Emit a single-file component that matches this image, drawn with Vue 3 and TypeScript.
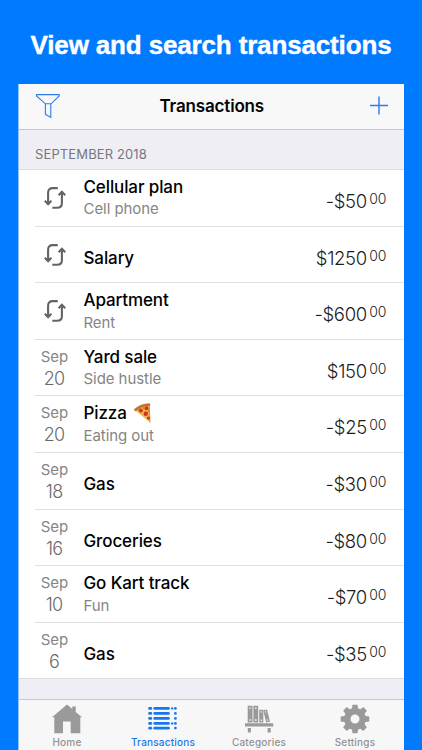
<script setup lang="ts">
interface Transaction {
  title: string
  category?: string
  day?: number
  sign: string
  amount: string
  pizza?: boolean
}

const transactions: Transaction[] = [
  { title: 'Cellular plan', category: 'Cell phone', sign: '-', amount: '50' },
  { title: 'Salary', sign: '', amount: '1250' },
  { title: 'Apartment', category: 'Rent', sign: '-', amount: '600' },
  { title: 'Yard sale', category: 'Side hustle', day: 20, sign: '', amount: '150' },
  { title: 'Pizza', category: 'Eating out', day: 20, sign: '-', amount: '25', pizza: true },
  { title: 'Gas', day: 18, sign: '-', amount: '30' },
  { title: 'Groceries', day: 16, sign: '-', amount: '80' },
  { title: 'Go Kart track', category: 'Fun', day: 10, sign: '-', amount: '70' },
  { title: 'Gas', day: 6, sign: '-', amount: '35' },
]

const listRows = [4, 9, 14, 19, 23.7]
const teeth = [0, 45, 90, 135, 180, 225, 270, 315]
</script>

<template>
  <main class="page">
    <h1 class="headline"><span>View and search transactions</span></h1>
    <section class="phone">
      <header class="nav">
        <svg class="funnel" width="26" height="26" viewBox="0 0 26 26">
          <path d="M1.5 1.6H24.2V3L16.1 10.8H10.4L1.5 3Z M10.4 10.8V21.4L15.8 24.3V10.8" />
        </svg>
        <h2>Transactions</h2>
        <svg class="plus" width="20" height="20" viewBox="0 0 20 20">
          <path d="M1 10.5H19 M10 1.5V19.5" />
        </svg>
      </header>
      <div class="section">SEPTEMBER 2018</div>
      <ul class="list">
        <li v-for="(t, i) in transactions" :key="i" class="row">
          <div class="when">
            <template v-if="t.day">
              <span class="month">Sep</span>
              <span class="day">{{ t.day }}</span>
            </template>
            <svg v-else class="repeat" width="22" height="22" viewBox="0 0 22 22">
              <path d="M13.8 1.1H8.8Q4.1 1.1 4.1 5.6V17 M.8 13.8L4.1 17.2L7.4 13.8 M8.3 20.8H13.1Q17.9 20.8 17.9 16.3V5 M14.6 8.2L17.9 4.8L21.2 8.2" />
            </svg>
          </div>
          <div class="body">
            <div class="info" :class="{ single: !t.category }">
              <div class="title">
                {{ t.title }}
                <svg v-if="t.pizza" class="pizza" width="19" height="21" viewBox="0 0 19 21">
                  <path d="M2 7Q8 2 16.2 1.8L17 19.5Z" fill="#f4b34a" />
                  <path d="M1 6.2Q7.5 .2 16.4 .2Q18 1 17 3Q8.5 2.8 3 8.2Q1 8 1 6.2Z" fill="#bd7431" />
                  <path d="M16.2 3L17 19.5" stroke="#d8903b" fill="none" />
                  <g fill="#cf3520">
                    <circle cx="13.5" cy="5.2" r="2" />
                    <circle cx="7.8" cy="7.6" r="2" />
                    <circle cx="12.8" cy="10.7" r="2.2" />
                    <circle cx="15.4" cy="15" r="1.6" />
                  </g>
                  <circle cx="10.6" cy="5" r=".8" fill="#6c803b" />
                  <circle cx="15.7" cy="8.2" r=".7" fill="#6c803b" />
                </svg>
              </div>
              <div v-if="t.category" class="category">{{ t.category }}</div>
            </div>
            <div class="amount">
              <span>{{ t.sign }}${{ t.amount }}</span><span class="cents">00</span>
            </div>
          </div>
        </li>
      </ul>
      <div class="filler"></div>
      <nav class="tabs">
        <div class="tab">
          <svg width="32" height="32" viewBox="0 0 32 32">
            <path d="M16 1.5L21.3 6V3.6H24.7V9L31 14.2H29.3V30.2H19.7V18.5H12V30.2H3.3V14.2H1Z" />
          </svg>
          <span>Home</span>
        </div>
        <div class="tab active">
          <svg width="32" height="32" viewBox="0 0 32 32">
            <g v-for="(y, i) in listRows" :key="y">
              <rect x="1.2" :y="y" width="4" height="2.8" rx="1.2" />
              <rect x="6.4" :y="y" width="16.4" height="2.8" rx="1.2" />
              <circle v-if="i === 0 || i === 3" cx="25.2" :cy="y + 1.4" r="1.2" />
              <circle cx="28.4" :cy="y + 1.4" r="1.4" />
            </g>
          </svg>
          <span>Transactions</span>
        </div>
        <div class="tab">
          <svg width="32" height="32" viewBox="0 0 32 32">
            <path d="M2 20.3H30.3V23.6H2Z M4.8 25H7.9V29.6H4.8Z M24.6 25H27.7V29.6H24.6Z" />
            <path fill-rule="evenodd" d="M4.7 2.7H9.5V19.6H4.7Z M6.3 4.4V5.8H7.9V4.4Z M6.3 16.2V17.8H7.9V16.2Z" />
            <path fill-rule="evenodd" d="M10.4 2.7H15.2V19.6H10.4Z M12 4.4V5.8H13.6V4.4Z M12 16.2V17.8H13.6V16.2Z" />
            <path fill-rule="evenodd" d="M16.2 6.8H20.3V19.6H16.2Z M17.6 8.3V9.6H18.9V8.3Z M17.6 16.5V17.9H18.9V16.5Z" />
            <path fill-rule="evenodd" d="M20.3 7.2L24 6.4L27 18.8L23.1 19.6Z M21.9 8.4L22.2 9.7L23.2 9.4L22.9 8.1Z M23.9 16.5L24.2 17.9L25.2 17.6L24.9 16.2Z" />
          </svg>
          <span>Categories</span>
        </div>
        <div class="tab">
          <svg width="32" height="32" viewBox="0 0 32 32">
            <circle class="ring" cx="16" cy="16" r="7.7" />
            <path v-for="a in teeth" :key="a" :transform="`rotate(${a} 16 16)`" d="M12.8 7L13.5 1.7H18.5L19.2 7Z" />
          </svg>
          <span>Settings</span>
        </div>
      </nav>
    </section>
  </main>
</template>

<style>
body {
  margin: 0;
  overflow: hidden;
}
</style>

<style scoped>
.page {
  box-sizing: border-box;
  width: 422px;
  height: 750px;
  background: #007aff;
  font-family: Inter, 'Liberation Sans', sans-serif;
  display: flex;
  flex-direction: column;
  overflow: hidden;
}
.headline {
  margin: 0;
  height: 84px;
  flex: none;
  padding-top: 29px;
  box-sizing: border-box;
  text-align: center;
  color: #fff;
  font: 700 26px/32px 'Liberation Sans', Arial, sans-serif;
  letter-spacing: -0.15px;
  -webkit-text-stroke: 0.4px #fff;
  white-space: nowrap;
}
.phone {
  box-sizing: border-box;
  width: 386px;
  height: 666px;
  margin-left: 18px;
  border-left: 1px solid #8fc5ff;
  background: #fff;
  display: flex;
  flex-direction: column;
}
.nav {
  box-sizing: border-box;
  height: 45.5px;
  flex: none;
  background: #f8f8f9;
  border-bottom: 1px solid #c5c5ca;
  display: grid;
  grid-template-columns: 26px 1fr 20px;
  padding: 0 15.5px 0 16px;
}
.nav h2 {
  margin: 0 6px 0 0;
  text-align: center;
  font-size: 17px;
  line-height: 45px;
  font-weight: 600;
  letter-spacing: -0.17px;
  color: #050505;
}
.nav path {
  fill: none;
  stroke: #2f7bea;
  stroke-width: 1.1;
}
.funnel {
  margin-top: 9px;
}
.nav .plus {
  margin-top: 11px;
}
.nav .plus path {
  stroke-width: 1.4;
}
.section {
  box-sizing: border-box;
  height: 40px;
  flex: none;
  background: #efeef4;
  border-bottom: 1px solid #dcdce0;
  padding: 15.5px 0 0 16px;
  font-size: 13px;
  line-height: 19px;
  letter-spacing: 0.12px;
  color: #77777b;
}
.list {
  list-style: none;
  margin: 0;
  padding: 0;
}
.row {
  height: 56.6px;
  display: flex;
  padding-left: 16px;
}
.row:last-child {
  height: 55.6px;
}
.row + .row .when,
.row + .row .body {
  border-top: 1px solid #e0e0e2;
}
.row:not(:first-child) .when,
.row:not(:first-child) .body {
  margin-top: -0.5px;
}
.when {
  box-sizing: border-box;
  width: 48.5px;
  padding: 7px 9.5px 0 0;
  display: flex;
  flex-direction: column;
  align-items: center;
  color: #858585;
}
.month {
  font-size: 15px;
  line-height: 20px;
}
.day {
  font-size: 18px;
  line-height: 24px;
  font-weight: 300;
  letter-spacing: -0.8px;
  margin-right: 0.8px;
  color: #6a6a6a;
}
.repeat {
  margin-top: 10px;
}
.repeat path {
  fill: none;
  stroke: #646464;
  stroke-width: 2.1;
}
.body {
  flex: 1;
  box-sizing: border-box;
  display: flex;
  justify-content: space-between;
  padding-right: 18px;
}
.info {
  padding-top: 6px;
}
.info.single {
  padding-top: 20px;
}
.title {
  display: flex;
  align-items: center;
  gap: 6px;
  font-size: 17px;
  line-height: 22px;
  height: 22px;
  font-weight: 500;
  letter-spacing: -0.11px;
  color: #000;
}
.category {
  margin-top: 1.5px;
  font-size: 15px;
  line-height: 20px;
  letter-spacing: -0.06px;
  color: #858585;
}
.amount {
  display: flex;
  font-size: 18.5px;
  line-height: 24px;
  font-weight: 300;
  padding-top: 19px;
  letter-spacing: -0.35px;
  color: #1c1c1c;
}
.cents {
  margin-left: 2.5px;
  font-size: 14px;
  line-height: 19px;
  letter-spacing: -0.3px;
}
.filler {
  flex: 1;
  background: #efeef4;
  border-top: 1px solid #dcdce0;
}
.tabs {
  box-sizing: border-box;
  height: 51.5px;
  flex: none;
  background: #f7f7f8;
  border-top: 1px solid #c9c9cc;
  display: grid;
  grid-template-columns: repeat(4, 1fr);
  padding-right: 1px;
}
.tab {
  display: flex;
  flex-direction: column;
  align-items: center;
  padding-top: 3px;
  color: #929292;
  fill: #9a9a9a;
  font-size: 10px;
  line-height: 12px;
  font-weight: 500;
  letter-spacing: 0.2px;
}
.tab svg {
  flex: none;
}
.ring {
  fill: none;
  stroke: #9a9a9a;
  stroke-width: 6.4;
}
.tab.active {
  color: #2478ea;
  fill: #1876ee;
}
.tab span {
  margin-top: 1.5px;
}
</style>
